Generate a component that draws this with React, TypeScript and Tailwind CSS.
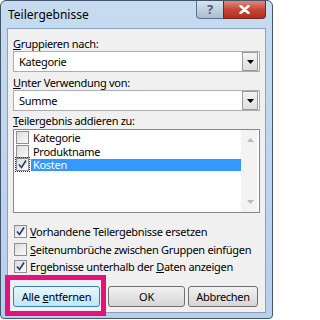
import React from "react";

const font = { fontFamily: '"Noto Sans", "Open Sans", sans-serif' };

function Check({ checked, focus }: { checked?: boolean; focus?: boolean }) {
  return (
    <div className={`flex h-[13px] w-[13px] shrink-0 items-center justify-center border border-[#8f8f8f] bg-gradient-to-br from-[#dcdcdc] to-[#fbfbfb] ${focus ? "outline outline-1 outline-dotted outline-[#333] outline-offset-0" : ""}`}>
      {checked && (
        <svg width="11" height="11" viewBox="0 0 11 11">
          <path d="M2 5.5 L4.5 8.5 L9 1.5" fill="none" stroke="#1c3f7a" strokeWidth="1.6" />
        </svg>
      )}
    </div>
  );
}

function Combo({ value }: { value: string }) {
  return (
    <div className="flex h-[21px] items-center border border-[#abadb3] bg-white pl-[5px] pr-[1px]">
      <span className="flex-1 leading-none text-black">{value}</span>
      <div className="flex h-[19px] w-[16px] items-center justify-center border border-[#9a9a9a] bg-gradient-to-b from-[#f4f4f4] to-[#dedede]">
        <svg width="7" height="4" viewBox="0 0 7 4">
          <path d="M0 0 H7 L3.5 4 Z" fill="#000" />
        </svg>
      </div>
    </div>
  );
}

export default function App() {
  return (
    <div className="h-[320px] w-[273px] overflow-hidden bg-white" style={font}>
      <div className="relative flex h-[319px] w-[273px] flex-col rounded-t-[6px] rounded-b-[4px] border border-[#44546a] bg-gradient-to-b from-[#c6dbf0] to-[#b7cfe9]">
        {/* title bar */}
        <div className="flex h-[27px] shrink-0 items-start">
          <span className="pl-[7px] pt-[6px] text-[12px] leading-[16px] text-black">Teilergebnisse</span>
          <div className="ml-auto mr-[6px] flex">
            <div className="flex h-[18px] w-[27px] items-center justify-center rounded-bl-[4px] border border-t-0 border-r-0 border-[#5f7386] bg-gradient-to-b from-[#d7e3ee] to-[#aabdd0] text-[13px] font-bold leading-none text-[#4d6174]">
              ?
            </div>
            <div className="flex h-[18px] w-[43px] items-center justify-center rounded-br-[4px] border border-t-0 border-[#6a2a24] bg-gradient-to-b from-[#e0877a] via-[#c4483a] to-[#b52c1e]">
              <svg width="11" height="9" viewBox="0 0 11 9">
                <path d="M1.5 1 L9.5 8 M9.5 1 L1.5 8" stroke="#fff" strokeWidth="2.4" strokeLinecap="round" />
              </svg>
            </div>
          </div>
        </div>
        {/* client */}
        <div className="mx-[6px] flex h-[285px] flex-col whitespace-nowrap border border-[#8da2ba] bg-[#f0f0f0] px-[5px] text-[11px] tracking-[-0.3px] text-black">
          <div className="mt-[8px] h-[14px] leading-[14px]"><span className="underline">G</span>ruppieren nach:</div>
          <Combo value="Kategorie" />
          <div className="mt-[4px] h-[14px] leading-[14px]"><span className="underline">U</span>nter Verwendung von:</div>
          <Combo value="Summe" />
          <div className="mt-[3px] h-[14px] leading-[14px]"><span className="underline">T</span>eilergebnis addieren zu:</div>
          <div className="mt-[1px] flex h-[84px] border border-[#828790] bg-white">
            <div className="flex flex-1 flex-col pl-[2px] pt-[1px]">
              <div className="flex h-[13.5px] items-center gap-[4px]">
                <Check />
                <span className="leading-none">Kategorie</span>
              </div>
              <div className="flex h-[13.5px] items-center gap-[4px]">
                <Check />
                <span className="leading-none">Produktname</span>
              </div>
              <div className="flex h-[13.5px] items-center gap-[2px]">
                <Check checked focus />
                <span className="flex h-[12px] flex-1 items-center bg-[#3399ff] pl-[2px] leading-none text-white">Kosten</span>
              </div>
            </div>
            <div className="flex w-[16px] flex-col items-center justify-between bg-[#f3f3f3] py-[8px] pl-[3px]">
              <svg width="7" height="4" viewBox="0 0 7 4"><path d="M0 4 H7 L3.5 0 Z" fill="#b9b9b9" /></svg>
              <svg width="7" height="4" viewBox="0 0 7 4"><path d="M0 0 H7 L3.5 4 Z" fill="#b9b9b9" /></svg>
            </div>
            <div className="w-[2px]" />
          </div>
          <div className="mt-[11px] flex h-[14px] items-center gap-[3px] pl-[1px]">
            <Check checked />
            <span className="leading-none"><span className="underline">V</span>orhandene Teilergebnisse ersetzen</span>
          </div>
          <div className="mt-[4px] flex h-[14px] items-center gap-[3px] pl-[1px]">
            <Check />
            <span className="leading-none"><span className="underline">S</span>eitenumbrüche zwischen Gruppen einfügen</span>
          </div>
          <div className="mt-[3px] flex h-[14px] items-center gap-[3px] pl-[1px]">
            <Check checked />
            <span className="leading-none">Ergebnisse unterhalb der <span className="underline">D</span>aten anzeigen</span>
          </div>
          <div className="mt-[13px] flex h-[21px] items-stretch">
            <div className="flex w-[87px] items-center justify-center rounded-[3px] border border-[#3c7fb1] bg-gradient-to-b from-[#eaf6fd] to-[#bee6fd] leading-none">
              Alle <span className="ml-[3px] underline">e</span>ntfernen
            </div>
            <div className="ml-[8px] flex w-[77px] items-center justify-center rounded-[3px] border border-[#707070] bg-gradient-to-b from-[#f2f2f2] to-[#d5d5d5] leading-none">
              OK
            </div>
            <div className="ml-[3px] flex w-[70px] items-center justify-center rounded-[3px] border border-[#707070] bg-gradient-to-b from-[#f2f2f2] to-[#d5d5d5] leading-none">
              Abbrechen
            </div>
          </div>
        </div>
        {/* highlight annotation */}
        <div className="absolute left-[4px] top-[274px] h-[41px] w-[101px] border-[5px] border-[#e3127f]" />
      </div>
    </div>
  );
}
